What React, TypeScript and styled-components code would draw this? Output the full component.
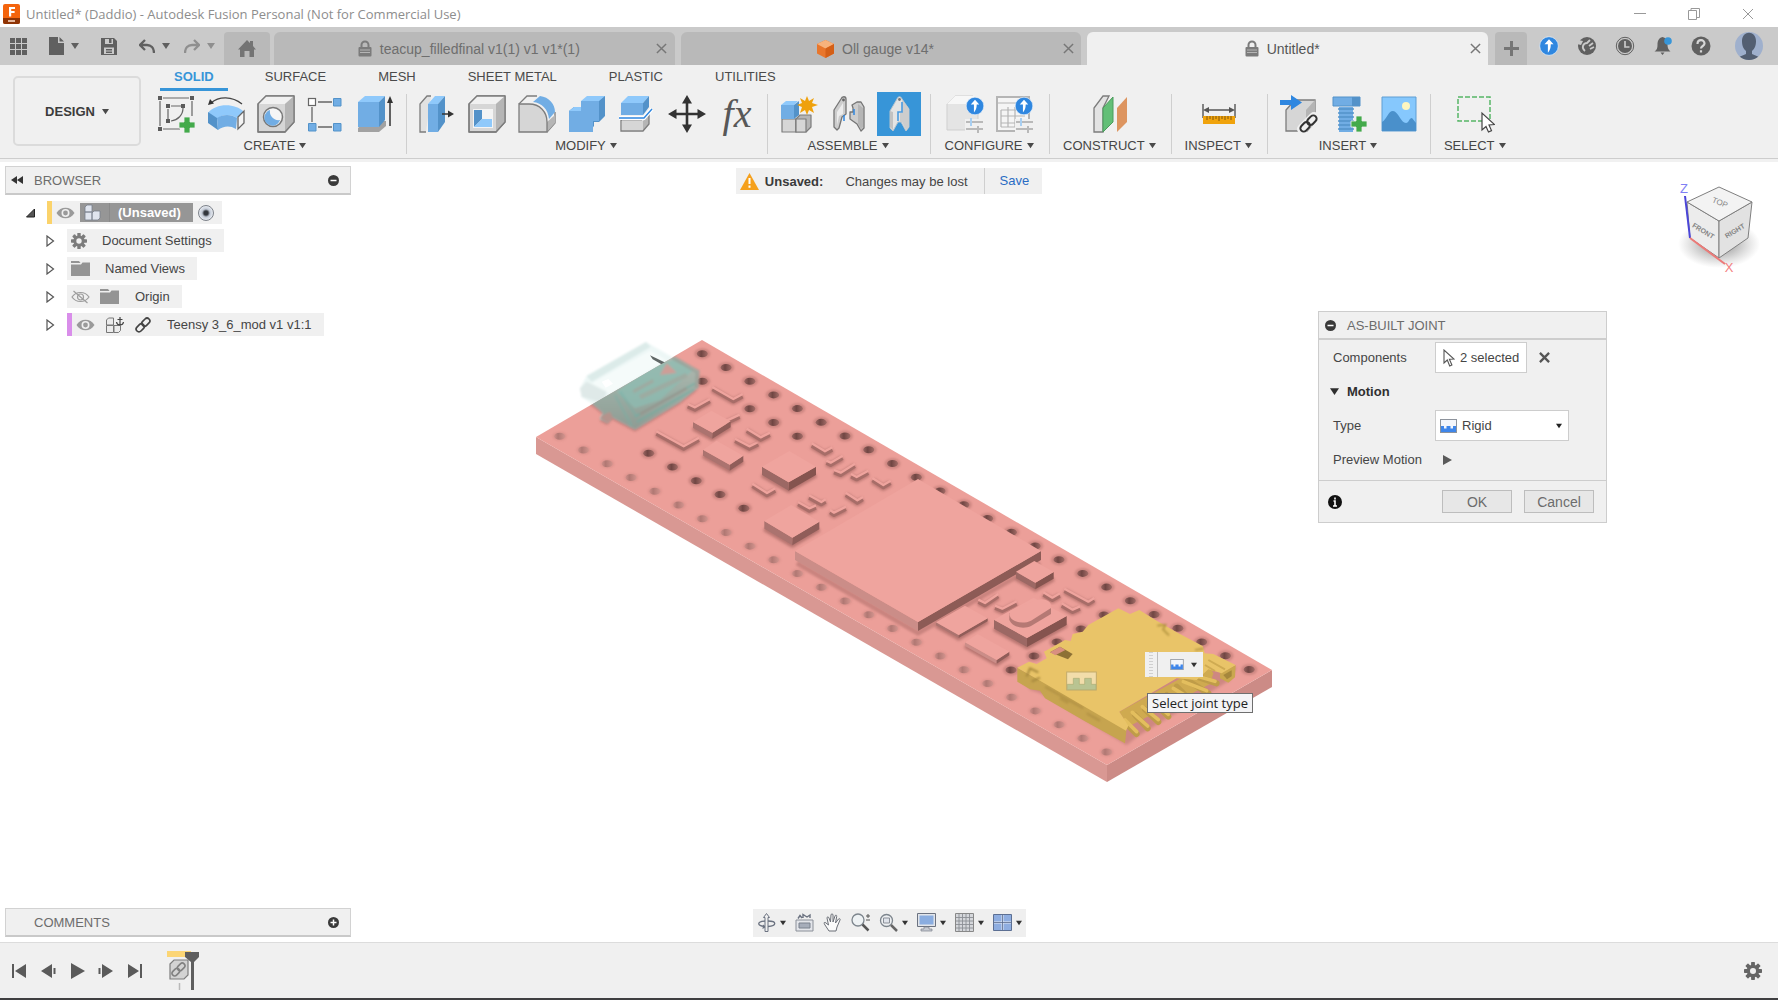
import React from "react";
import styled, { createGlobalStyle } from "styled-components";

const Global = createGlobalStyle`
  *, *::before, *::after { box-sizing: border-box; }
  body { margin: 0; background: #fff; }
  body, button, select, input { font-family: "Liberation Sans", Arial, sans-serif; font-size: 13px; color: #454545; }
  button { border: 0; background: none; padding: 0; margin: 0; cursor: pointer; }
  svg { display: block; flex: none; }
  h1, h2, ul { margin: 0; padding: 0; font-weight: normal; font-size: 13px; list-style: none; }
`;

/* ---------- colours shared by the solid-body icons ---------- */
const B = { face: "#71ade4", top: "#8fc9fb", side: "#5392c9" };
const G = { face: "#d6d6d6", top: "#f1f1f1", side: "#b5b5b5", line: "#7c7c7c" };

/* ---------- window ---------- */
const Page = styled.div`
  display: flex;
  flex-direction: column;
  min-height: 100vh;
  border-bottom: 2px solid #3f3f41;
`;
const TitleBar = styled.header`
  display: flex;
  align-items: center;
  height: 27px;
  padding: 0 3px;
  gap: 6px;
`;
const WindowTitle = styled.h1`
  flex: 1;
  font-family: "Open Sans", "Noto Sans", sans-serif;
  font-size: 13px;
  color: #8d8d8d;
  white-space: nowrap;
`;
const WindowButton = styled.button`
  display: grid;
  place-items: center;
  width: 54px;
  height: 26px;
`;
const WindowButtons = styled.div`
  display: flex;
`;

/* ---------- document tabs ---------- */
const DocBar = styled.div`
  display: flex;
  align-items: flex-end;
  height: 38px;
  background: #cacaca;
`;
const QuickAccess = styled.div`
  display: flex;
  align-items: center;
  gap: 22px;
  width: 224px;
  height: 38px;
  padding-left: 10px;
`;
const Pair = styled.div`
  display: flex;
  gap: 14px;
`;
const IconButton = styled.button<{ $faded?: boolean }>`
  display: flex;
  align-items: center;
  gap: 7px;
  opacity: ${(p) => (p.$faded ? 0.55 : 1)};
`;
const HomeTab = styled.button`
  display: grid;
  place-items: center;
  width: 46px;
  height: 33px;
  margin-right: 4px;
  background: #b9b9b9;
  border-radius: 4px 4px 0 0;
`;
const DocTabs = styled.div`
  flex: 1;
  display: flex;
  gap: 6px;
`;
const DocTab = styled.div<{ $active?: boolean }>`
  flex: 1;
  display: flex;
  align-items: center;
  height: 33px;
  padding: 0 5px 0 10px;
  border-radius: 6px 6px 0 0;
  background: ${(p) => (p.$active ? "#f0f0f0" : "#b9b9b9")};
`;
const DocName = styled.button<{ $active?: boolean }>`
  flex: 1;
  display: flex;
  align-items: center;
  justify-content: center;
  gap: 8px;
  font-size: 14px;
  white-space: nowrap;
  color: ${(p) => (p.$active ? "#555" : "#6e6e6e")};
`;
const CloseTab = styled.button`
  display: grid;
  place-items: center;
  width: 16px;
  height: 16px;
`;
const AddTab = styled(HomeTab)`
  width: 32px;
  margin: 0 0 0 7px;
`;
const Account = styled.div`
  display: flex;
  align-items: center;
  gap: 18px;
  height: 38px;
  padding: 0 15px 0 12px;
`;
const Avatar = styled.button`
  width: 28px;
  height: 28px;
  margin-left: 6px;
`;

/* ---------- ribbon ---------- */
const Ribbon = styled.section`
  display: flex;
  height: 94px;
  padding-left: 13px;
  background: #f0f0f0;
  border-bottom: 1px solid #cdcdcd;
`;
const RibbonFoot = styled.div`
  height: 3px;
  background: #f1f1f1;
`;
const Workspace = styled.button`
  display: flex;
  align-items: center;
  justify-content: center;
  gap: 7px;
  width: 128px;
  height: 70px;
  margin-top: 11px;
  border: 2px solid #dbdbdb;
  border-radius: 5px;
  font-weight: bold;
  color: #3c3c3c;
`;
const RibbonBody = styled.div`
  margin-left: 5px;
`;
const RibbonTabs = styled.nav`
  display: flex;
  gap: 22px;
  padding-left: 14px;
`;
const RibbonTab = styled.button<{ $active?: boolean }>`
  height: 26px;
  padding: 0 ${(p) => (p.$active ? 14 : 15)}px;
  border-bottom: 3px solid ${(p) => (p.$active ? "#3795d8" : "transparent")};
  font-weight: ${(p) => (p.$active ? "bold" : "normal")};
  color: ${(p) => (p.$active ? "#3795d8" : "#4a4a4a")};
  white-space: nowrap;
`;
const Groups = styled.div`
  display: flex;
  padding-top: 3px;
`;
const Group = styled.div<{ $pad: number }>`
  display: flex;
  flex-direction: column;
  align-items: center;
  height: 60px;
  padding: 0 ${(p) => p.$pad}px;
  border-right: 1px solid #cfcfcf;
  &:last-child { border-right: 0; }
`;
const Tools = styled.div`
  display: flex;
`;
const Tool = styled.button<{ $on?: boolean }>`
  display: grid;
  place-items: center;
  width: 44px;
  height: 44px;
  margin: -2px 3px 0;
  background: ${(p) => (p.$on ? "#3795d8" : "transparent")};
`;
const Formula = styled.span`
  font-family: "Liberation Serif", "Times New Roman", serif;
  font-style: italic;
  font-size: 40px;
  line-height: 44px;
  height: 44px;
  color: #585858;
`;
const GroupMenu = styled.button`
  display: flex;
  align-items: center;
  gap: 4px;
  height: 22px;
  margin-right: 2px;
  white-space: nowrap;
`;

/* ---------- viewport ---------- */
const Viewport = styled.main`
  position: relative;
  flex: 1;
  display: flex;
  flex-direction: column;
  justify-content: space-between;
  min-height: 600px;
  padding: 4px 5px 5px 5px;
  overflow: hidden;
`;
const Scene = styled.div`
  position: absolute;
  inset: 0;
  display: flex;
  justify-content: center;
  align-items: flex-start;
  padding-top: 168px;
`;
const Stage = styled.div`
  position: relative;
`;
const TopRow = styled.div`
  position: relative;
  display: grid;
  grid-template-columns: 1fr auto 1fr;
  align-items: start;
`;
const BottomRow = styled(TopRow)`
  align-items: center;
`;
const PanelBar = styled.div`
  display: flex;
  align-items: center;
  gap: 11px;
  width: 346px;
  height: 29px;
  padding: 0 11px 0 5px;
  background: #f0f0f0;
  border: 1px solid #d2d2d2;
  border-bottom: 2px solid #c9c9c9;
`;
const PanelTitle = styled.h2<{ $inset?: boolean }>`
  flex: 1;
  padding-left: ${(p) => (p.$inset ? 23 : 0)}px;
  color: #6c6c6c;
`;
const Tree = styled.ul`
  display: flex;
  flex-direction: column;
  gap: 5px;
  padding-top: 6px;
`;
const Node = styled.li<{ $depth: number }>`
  display: flex;
  align-items: center;
  gap: 12px;
  height: 23px;
  padding-left: ${(p) => 21 + p.$depth * 20}px;
`;
const NodeBody = styled.div<{ $mark?: string; $tail?: number; $gap?: number }>`
  display: flex;
  align-items: center;
  gap: ${(p) => p.$gap ?? 10}px;
  height: 23px;
  padding: 0 ${(p) => p.$tail ?? 12}px 0 4px;
  background: #f0f0f0;
  border-left: ${(p) => (p.$mark ? "5px solid " + p.$mark : "0")};
  white-space: nowrap;
`;
const NodeName = styled.button`
  padding-left: 6px;
  height: 23px;
`;
const RootName = styled.button`
  display: flex;
  align-items: center;
  height: 19px;
  gap: 8px;
  padding: 0 12px 0 4px;
  background: #969696;
  color: #fff;
  font-weight: bold;
  font-size: 13px;
`;
const RootRule = styled.span`
  width: 1px;
  height: 19px;
  background: #8a8a8a;
`;
const RootRadio = styled.input`
  appearance: none;
  width: 16px;
  height: 16px;
  margin: 0;
  border: 1px solid #7d828a;
  border-radius: 50%;
  background: radial-gradient(circle, #33373d 0 2px, #c3cad6 4px, #e8ecf2 7px);
`;
const Notice = styled.div`
  display: flex;
  align-items: center;
  height: 26px;
  margin-top: 2px;
  padding-left: 4px;
  background: #f0f0f0;
  white-space: nowrap;
`;
const NoticeStrong = styled.strong`
  padding: 0 22px 0 6px;
  color: #3a3a3a;
`;
const NoticeText = styled.span`
  padding-right: 16px;
`;
const SaveLink = styled.a`
  padding: 0 13px 0 15px;
  border-left: 1px solid #cfcfcf;
  line-height: 26px;
  color: #2a6cc4;
  text-decoration: none;
`;
const Cube = styled.div`
  justify-self: end;
  margin: 10px 11px 0 0;
`;
const NavBar = styled.div`
  display: flex;
  align-items: center;
  height: 28px;
  gap: 9px;
  padding: 0 4px;
  background: #efefef;
`;
const NavButton = styled.button`
  display: flex;
  align-items: center;
  gap: 4px;
`;

/* ---------- joint dialog ---------- */
const Dialog = styled.section`
  position: absolute;
  top: 149px;
  right: 171px;
  width: 289px;
  background: #f0f0f0;
  border: 1px solid #cdcdcd;
`;
const DialogHead = styled.div`
  display: flex;
  align-items: center;
  gap: 11px;
  height: 28px;
  padding-left: 6px;
  border-bottom: 2px solid #cdcdcd;
`;
const Form = styled.div`
  display: grid;
  grid-template-columns: 102px 1fr;
  row-gap: 3px;
  align-items: center;
  padding: 2px 14px 5px 14px;
  border-bottom: 1px solid #cdcdcd;
`;
const FieldLabel = styled.label`
  white-space: nowrap;
`;
const FieldCell = styled.div`
  display: flex;
  align-items: center;
  height: 31px;
  gap: 12px;
`;
const Picker = styled.button`
  display: flex;
  align-items: center;
  gap: 5px;
  height: 31px;
  padding: 0 7px;
  background: #fff;
  border: 1px solid #cdcdcd;
`;
const SectionToggle = styled.button`
  grid-column: 1 / -1;
  display: flex;
  align-items: center;
  gap: 8px;
  height: 31px;
  margin-left: -3px;
  font-weight: bold;
  color: #2f2f2f;
`;
const SelectBox = styled.div`
  display: flex;
  align-items: center;
  gap: 5px;
  width: 134px;
  height: 31px;
  padding: 0 6px 0 4px;
  background: #fff;
  border: 1px solid #cdcdcd;
`;
const Choice = styled.select`
  flex: 1;
  appearance: none;
  border: 0;
  padding: 0;
  height: 29px;
  background: none;
`;
const DialogFoot = styled.div`
  display: flex;
  align-items: center;
  gap: 12px;
  height: 41px;
  padding: 0 12px 0 9px;
`;
const Spacer = styled.span`
  flex: 1;
`;
const PushButton = styled.button`
  width: 70px;
  height: 23px;
  border: 1px solid #bdbdbd;
  background: #e7e7e7;
  font-size: 14px;
  color: #6c6c6c;
`;

/* ---------- floating marks over the model ---------- */
const MiniBar = styled.div`
  position: absolute;
  left: 645px;
  top: 322px;
  display: flex;
  align-items: center;
  gap: 12px;
  height: 25px;
  width: 58px;
  padding-left: 4px;
  background: #f0f0f0;
`;
const Grip = styled.span`
  width: 9px;
  height: 25px;
  border-right: 1px solid #bdbdbd;
  background: repeating-linear-gradient(0deg, #d0d0d0 0 1px, #f0f0f0 1px 3px);
  background-size: 4px 25px;
  background-repeat: no-repeat;
`;
const Tip = styled.div`
  position: absolute;
  left: 647px;
  top: 363px;
  padding: 0 4px;
  height: 20px;
  border: 1px solid #6f6f6f;
  background: #f4f4f6;
  font-family: "Open Sans", "Noto Sans", sans-serif;
  font-size: 13px;
  line-height: 18px;
  color: #222;
  white-space: nowrap;
`;

/* ---------- timeline ---------- */
const Timeline = styled.footer`
  display: flex;
  align-items: center;
  height: 56px;
  padding: 0 16px 0 11px;
  background: #f0f0f0;
  border-top: 1px solid #dcdcdc;
`;
const Transport = styled.div`
  display: flex;
  gap: 13px;
  margin-right: 23px;
`;

/* ---------- small glyphs ---------- */
const Caret = ({ w = 7, c = "#4a4a4a" }: { w?: number; c?: string }) => (
  <svg width={w} height={w} viewBox="0 0 8 8"><path d="M0 1h8L4 7z" fill={c} /></svg>
);
const Cross = ({ s = 11, c = "#777", w = 1.6 }: { s?: number; c?: string; w?: number }) => (
  <svg width={s} height={s} viewBox="0 0 12 12"><path d="M1 1l10 10M11 1L1 11" stroke={c} strokeWidth={w} fill="none" /></svg>
);
const Lock = () => (
  <svg width="14" height="17" viewBox="0 0 14 17">
    <path d="M3.5 8V5a3.5 3.5 0 0 1 7 0v3" fill="none" stroke="#7b7b7b" strokeWidth="2" />
    <rect x="0.5" y="7" width="13" height="9.5" rx="1" fill="#7b7b7b" />
    <path d="M2 10h10M2 12.500h10" stroke="#b5b5b5" strokeWidth="1" />
  </svg>
);
const Round = ({ plus }: { plus?: boolean }) => (
  <svg width="11" height="11" viewBox="0 0 11 11">
    <circle cx="5.500" cy="5.500" r="5.500" fill="#3a3a3a" />
    <path d={plus ? "M2.500 5.500h6M5.500 2.500v6" : "M2.500 5.500h6"} stroke="#fff" strokeWidth="1.500" />
  </svg>
);
const Eye = ({ off }: { off?: boolean }) => (
  <svg width="19" height="14" viewBox="0 0 19 14">
    {off ? (
      <g fill="none" stroke="#9d9d9d" strokeWidth="1.200">
        <path d="M1 7c4-6 13-6 17 0-4 6-13 6-17 0z" /><circle cx="9.500" cy="7" r="3" /><path d="M2.500 1l14 12" />
      </g>
    ) : (
      <g><path d="M.5 7c4-7 14-7 18 0-4 7-14 7-18 0z" fill="#9a9a9a" /><circle cx="9.500" cy="7" r="4" fill="#f0f0f0" /><circle cx="9.500" cy="7" r="2.400" fill="#9a9a9a" /></g>
    )}
  </svg>
);
const Folder = () => (
  <svg width="19" height="15" viewBox="0 0 19 15"><path d="M0 0h8l1.500 2H0zM0 3.500h10L11.500 1.500H19V15H0z" fill="#949494" /></svg>
);
const Gear = ({ s = 16, c = "#7c7c7c" }: { s?: number; c?: string }) => (
  <svg width={s} height={s} viewBox="0 0 16 16">
    <g fill={c}>
      {[0, 45, 90, 135].map((a) => <rect key={a} x="6.300" y="0" width="3.400" height="16" rx=".6" transform={`rotate(${a} 8 8)`} />)}
      <circle cx="8" cy="8" r="5.600" />
    </g>
    <circle cx="8" cy="8" r="2.700" fill="#f0f0f0" />
  </svg>
);
const Chain = ({ s = 16, c = "#444" }: { s?: number; c?: string }) => (
  <svg width={s} height={s} viewBox="0 0 16 16">
    <g fill="none" stroke={c} strokeWidth="1.700" transform="rotate(-45 8 8)">
      <rect x="-.5" y="5.200" width="9" height="5.600" rx="2.800" /><rect x="7.500" y="5.200" width="9" height="5.600" rx="2.800" />
    </g>
  </svg>
);
const Expander = ({ open }: { open?: boolean }) => (
  <svg width="9" height="12" viewBox="0 0 9 12">
    {open ? <path d="M8.500 2v8H.5z" fill="#555" stroke="#222" /> : <path d="M1 1v10l6.500-5z" fill="#fff" stroke="#555" strokeWidth="1.200" />}
  </svg>
);
const RigidMark = ({ w = 17 }: { w?: number }) => (
  <svg width={w} height={Math.round(w * 0.82)} viewBox="0 0 17 14">
    <rect x=".5" y=".5" width="16" height="13" fill="#f4f6fb" stroke="#8d939c" />
    <path d="M1 7h3v2.500h2.500V7h4v2.500H13V7h3v6H1z" fill="#3f86ea" />
  </svg>
);
const Pointer = () => (
  <svg width="12" height="18" viewBox="0 0 12 18">
    <path d="M1 1v13l3.300-3 2.400 6 2.200-1-2.500-5.700L11 10z" fill="#fff" stroke="#555" strokeWidth="1.100" />
  </svg>
);

const I = ({ children }: { children: React.ReactNode }) => <svg width="38" height="38" viewBox="0 0 38 38">{children}</svg>;
const Plus = ({ x, y }: { x: number; y: number }) => (
  <path transform={`translate(${x} ${y})`} d="M5 0h6v5h5v6h-5v5H5v-5H0V5h5z" fill="#43aa4b" stroke="#f0f0f0" strokeWidth=".8" />
);
const Up = ({ x, y, r }: { x: number; y: number; r: number }) => (
  <g transform={`translate(${x} ${y}) scale(${r / 8})`}>
    <circle r="8.300" fill="#2f87e0" stroke="#e8f1fb" strokeWidth=".6" />
    <path d="M0-6L4-1.500H1.600C1.600 2 .8 4 -1 6V-1.500H-4z" fill="#fff" />
  </g>
);

const SketchIcon = () => (
  <I>
    <g fill="none" stroke="#666" strokeWidth="1.200">
      <path d="M6 3h26M3 6v25M6 34h17M35 6v15M11 14v10M14 11h11M26 13c0 7-5 12-12 13" />
    </g>
    <g fill="#5b5b5b"><path d="M1 1h4v4H1zM33 1h4v4h-4zM1 32h4v4H1zM9 9h4v4H9zM24 9h4v4h-4zM9 24h4v4H9z" /></g>
    <Plus x={22} y={22} />
  </I>
);
const SweepIcon = () => (
  <I>
    <path d="M1 18C9 8 28 8 37 17l-7 6C24 19 15 19 10 24z" fill={B.top} />
    <path d="M1 17l9 6 1 12L1 28z" fill={B.side} /><path d="M10 23c6-4 14-4 20 0l-1 11c-6-4-13-3-18 1z" fill={B.face} />
    <path d="M31 22l6-6v12l-6 6z" fill="#f4f4f4" stroke="#666" strokeWidth="1.300" />
    <path d="M4 8C12 1 25 1 35 9" fill="none" stroke="#444" strokeWidth="1.400" /><path d="M1 10l2-6 4 4.500z" fill="#333" />
  </I>
);
const GrayBox = () => (
  <g stroke={G.line} strokeWidth="1.300" strokeLinejoin="round">
    <path d="M1 9L9 1h28v26l-9 10H1z" fill={G.face} /><path d="M1 9L9 1h28l-9 8z" fill={G.top} stroke="none" />
    <path d="M37 1v26l-9 10V9z" fill={G.side} stroke="none" /><path d="M1 9L9 1h28v26l-9 10H1z" fill="none" />
  </g>
);
const HoleIcon = () => (
  <I><GrayBox /><circle cx="16" cy="22" r="9.500" fill="#f6f6f6" stroke="#777" strokeWidth="1.500" />
    <path d="M13 15a8 8 0 1 0 10 10c-6 1-11-4-10-10z" fill={B.face} /></I>
);
const PatternIcon = () => (
  <I>
    <path d="M11 7h14M5 12v15M11 32h14" stroke="#666" strokeWidth="1.300" />
    <rect x="1.500" y="3.500" width="7" height="7" fill="#fff" stroke="#666" strokeWidth="1.200" />
    <g fill={B.face} stroke={B.side}><path d="M26.500 3.500h7.500v7.500h-7.500zM1.500 28.500h7.500v7.500H1.500zM26.500 28.500h7.500v7.500h-7.500z" /></g>
  </I>
);
const ExtrudeIcon = () => (
  <I>
    <path d="M1 33l8-7h20v5l-7 6H1z" fill="#a2a2a2" /><path d="M1 7l7-6h20l-6 6z" fill={B.top} />
    <path d="M1 7h21v25H1z" fill={B.face} /><path d="M22 7l6-6v24l-6 7z" fill={B.side} />
    <path d="M33 6v25" stroke="#333" strokeWidth="1.500" /><path d="M30 8l3-7 3 7z" fill="#333" />
  </I>
);
const PressIcon = () => (
  <I>
    <path d="M8 37H2V9l7-8h4" fill="#e2e2e2" stroke={G.line} strokeWidth="1.300" /><path d="M10 9l7-8h10l-7 8z" fill={B.top} />
    <path d="M10 9h10v28H10z" fill={B.face} /><path d="M20 9l7-8v26l-7 10z" fill={B.side} />
    <path d="M24 19h8" stroke="#333" strokeWidth="1.500" /><path d="M30 15.500l6 3.500-6 3.500z" fill="#333" />
  </I>
);
const ShellIcon = () => (
  <I><GrayBox /><rect x="5" y="14" width="20" height="19" fill="#f4f4f4" /><path d="M6 15h8v9l-8 8z" fill={B.side} /><path d="M14 24h10v8H6z" fill={B.top} /></I>
);
const FilletIcon = () => (
  <I>
    <path d="M1 9L9 1h10M29 37l8-9V17" fill="none" stroke={G.line} strokeWidth="1.300" />
    <path d="M29 27l8-7v8l-8 9z" fill={G.side} /><path d="M2 9l8-7h8l-6 8z" fill={G.top} />
    <path d="M1 9h10c11 0 18 8 18 18v10H1z" fill={G.face} stroke={G.line} strokeWidth="1.300" />
    <path d="M15 7l7-6c9 1 15 8 15 16l-6 7C30 14 24 8 15 7z" fill={B.face} />
  </I>
);
const CombineIcon = () => (
  <I>
    <path d="M1 16l5-4h9v-4l5-7h17v20l-6 6h-5v4l-5 6H1z" fill={B.side} /><path d="M13 6l6-5h18l-6 5zM1 16l5-4h7v4z" fill={B.top} />
    <path d="M13 6h18v20h-6v11H1V16h12z" fill={B.face} />
  </I>
);
const SplitIcon = () => (
  <I>
    <path d="M3 8l7-7h21l-6 7z" fill={B.top} /><path d="M3 8h22v12H3z" fill={B.face} /><path d="M25 8l6-7v11l-6 8z" fill={B.side} />
    <path d="M25 26l6-7v10l-6 7z" fill={G.side} /><path d="M31 19v10l-6 7H3V25h21" fill="none" stroke={G.line} strokeWidth="1.300" /><path d="M4 25.500h21V35H4z" fill={G.face} />
    <path d="M1 23h25l8-9" fill="none" stroke="#fff" strokeWidth="4" /><path d="M1 23h25l8-9" fill="none" stroke="#2f87e0" strokeWidth="1.400" />
  </I>
);
const MoveIcon = () => (
  <I><path d="M19 5v28M5 19h28" stroke="#333" strokeWidth="2.600" /><path d="M19 0l5 8.500H14zM19 38l5-8.500H14zM0 19l8.500-5v10zM38 19l-8.500-5v10z" fill="#333" /></I>
);
const FxIcon = () => <Formula>fx</Formula>;
const NewComponentIcon = () => (
  <I>
    <g stroke={G.line} strokeWidth="1.200" strokeLinejoin="round">
      <path d="M2 24h14v13H2z" fill={G.face} /><path d="M16 24l4-4h11v12l-5 5H16z" fill={G.side} /><path d="M16 24h10v13H16z" fill={G.face} />
    </g>
    <path d="M1 10l5-4h12l-4 4z" fill={B.top} /><path d="M1 10h13v14H1z" fill={B.face} /><path d="M14 10l5-4v14l-5 4z" fill={B.side} />
    <path d="M27 1l2 5 5-3-2 5 6 2-6 2 2 6-5-3-2 5-2-5-5 3 2-6-5-2 5-2-2-5 5 3z" fill="#efa10c" />
  </I>
);
const JointIcon = () => (
  <I>
    <g fill="#cdcdcd" stroke="#757575" strokeWidth="1.300" strokeLinejoin="round">
      <path d="M4 15L11 4c1-3 5-3 5 0v15l-4 3-3 11-2 2-3-3z" /><path d="M20 17h3v-4l-1-3 5-3h4l3 5v21l-3 3-4-7-7-5z" />
    </g>
    <path d="M7 17l6-9v11l-4 2-2 9z" fill="#ececec" /><path d="M24 14v6M14 20v6" stroke="#2f87e0" strokeWidth="1.500" />
    <path d="M28 9l5 4v19l-2 2-3-5z" fill="#b5b5b5" /><circle cx="13.500" cy="5" r="1.400" fill="#666" />
  </I>
);
const BuiltIcon = () => (
  <I>
    <path d="M10 16L17 4c1-3 4-3 5 0l7 10v18l-3 4-5-9h-3l-5 9-3-3z" fill="#e4e4e4" stroke="#b9c4cd" strokeLinejoin="round" />
    <path d="M22 5l7 9v18l-3 3-4-8h-2V18h2z" fill="#cdcdcd" /><path d="M10 16l3 1v18l-3-3z" fill="#c2c2c2" />
    <path d="M22 7v10h-4v9" fill="none" stroke="#4a9be0" strokeWidth="1.600" /><circle cx="19.500" cy="4.500" r="1.400" fill="#777" />
  </I>
);
const Sliders = () => (
  <g stroke="#b9b9b9" strokeWidth="2"><path d="M20 27h17M20 34h17M25 24v6M32 31v7" /><path d="M25 23v8" stroke="#a8cff2" /></g>
);
const ConfigBodyIcon = () => (
  <I>
    <path d="M1 9l8-8h18l5 5v20l-8 9H1z" fill="#e4e4e4" stroke="#cfcfcf" /><path d="M1 9l8-8h20l-6 8z" fill="#f7f7f7" />
    <path d="M19 24h19v14H19z" fill="#f0f0f0" /><Sliders /><Up x={29} y={11} r={8.5} />
  </I>
);
const ConfigTableIcon = () => (
  <I>
    <path d="M1 2h32v34H1z" fill="#f5f5f5" stroke="#b5b5b5" strokeWidth="2" /><path d="M1 8h32M5 15h24M5 21h24M5 28h14M5 15v17M12 12v20M19 12v20M5 32h14" stroke="#b5b5b5" strokeWidth="1.200" />
    <path d="M19 24h19v14H19z" fill="#f0f0f0" /><Sliders /><Up x={28} y={11} r={8.5} />
  </I>
);
const ConstructIcon = () => (
  <I>
    <path d="M3 37V13L12 1h6L12 13v24z" fill="#e3e3e3" stroke={G.line} strokeWidth="1.300" /><path d="M12 13L22 2v25L12 37z" fill="#63bf77" stroke="#4b9c5c" /><path d="M26 13L36 2v25L26 37z" fill="#dd9560" />
  </I>
);
const InspectIcon = () => (
  <I>
    <path d="M3 9v14M35 9v14M6 15h26" stroke="#555" strokeWidth="1.400" /><path d="M3 15l6-3v6zM35 15l-6-3v6z" fill="#555" /><path d="M3 21h32v8H3z" fill="#f0a30c" />
    <path d="M7 21v4M10 21v3M13 21v4M16 21v3M19 21v5M22 21v3M25 21v4M28 21v3M31 21v4" stroke="#805608" />
  </I>
);
const DeriveIcon = () => (
  <I>
    <path d="M6 15l9-10h20v22l-8 9H6z" fill={G.face} stroke={G.line} strokeWidth="1.300" /><path d="M26 15l9-10v22l-9 9z" fill={G.side} />
    <path d="M0 5h11V0l11 7.500L11 15v-5H0z" fill="#2f87e0" />
    <path d="M22 34L34 22" stroke="#f0f0f0" strokeWidth="10" strokeLinecap="round" />
    <g transform="translate(19 19)"><Chain s={19} c="#333" /></g>
  </I>
);
const BoltIcon = () => (
  <I>
    <path d="M3 2h27v9H3z" fill={B.face} stroke={B.side} /><path d="M22 2h8v9h-8z" fill={B.side} /><path d="M9 12h14v25H9z" fill={B.face} />
    <path d="M8 14h16M8 18h16M8 22h16M8 26h16M8 30h16M8 34h16" stroke={B.side} strokeWidth="1.400" /><Plus x={21} y={21} />
  </I>
);
const ImageIcon = () => (
  <I>
    <path d="M2 2h34v34H2z" fill="#86c8fd" stroke="#5e9ed4" /><circle cx="26" cy="11" r="4" fill="#fdf6c0" />
    <path d="M2 27c5-3 6-11 11-11s8 12 13 12c3 0 3-5 6-5l4 5v8H2z" fill="#4a90cb" />
  </I>
);
const SelectIcon = () => (
  <I>
    <rect x="1" y="2" width="32" height="24" fill="none" stroke="#55b566" strokeWidth="1.500" strokeDasharray="5 2" />
    <path d="M25 18v17l4-3.500 2.500 5.500 3-1.400-2.500-5.600 5.500-.5z" fill="#fff" stroke="#444" strokeWidth="1.200" />
  </I>
);

const GROUPS: { name: string; pad: number; tools: [string, () => React.ReactElement, boolean?][] }[] = [
  { name: "CREATE", pad: 5, tools: [["Create Sketch", SketchIcon], ["Sweep", SweepIcon], ["Hole", HoleIcon], ["Pattern", PatternIcon], ["Extrude", ExtrudeIcon]] },
  { name: "MODIFY", pad: 5, tools: [["Press Pull", PressIcon], ["Shell", ShellIcon], ["Fillet", FilletIcon], ["Combine", CombineIcon], ["Split Body", SplitIcon], ["Move", MoveIcon], ["Parameters", FxIcon]] },
  { name: "ASSEMBLE", pad: 6, tools: [["New Component", NewComponentIcon], ["Joint", JointIcon], ["As-built Joint", BuiltIcon, true]] },
  { name: "CONFIGURE", pad: 9, tools: [["Configure", ConfigBodyIcon], ["Configuration Table", ConfigTableIcon]] },
  { name: "CONSTRUCT", pad: 13, tools: [["Offset Plane", ConstructIcon]] },
  { name: "INSPECT", pad: 13, tools: [["Measure", InspectIcon]] },
  { name: "INSERT", pad: 6, tools: [["Derive", DeriveIcon], ["Fastener", BoltIcon], ["Canvas", ImageIcon]] },
  { name: "SELECT", pad: 13, tools: [["Select", SelectIcon]] },
];

/* ---------- the circuit board model ---------- */
const Hole = ({ x, y, dark }: { x: number; y: number; dark?: boolean }) => (
  <g>
    <ellipse cx={x} cy={y} rx={dark ? 8 : 7} ry={dark ? 5.5 : 4.5} fill="#b06f6a" opacity={dark ? 0.5 : 0.25} filter="url(#soft)" />
    <ellipse cx={x} cy={y} rx="5.500" ry="3.500" fill={dark ? "url(#holeDark)" : "url(#holeLight)"} />
  </g>
);
const PITCH = [23.78, 13.73];
const run = (x: number, y: number, idx: number[], dark?: boolean) =>
  idx.map((i) => <Hole key={`${x}-${i}`} x={x + PITCH[0] * i} y={y + PITCH[1] * i} dark={dark} />);
const range = (n: number) => Array.from({ length: n }, (_, i) => i);

type P = [number, number];
const Chip = ({ l, b, r, h, lit, deep }: { l: P; b: P; r: P; h: number; lit?: boolean; deep?: boolean }) => {
  const t: P = [l[0] + r[0] - b[0], l[1] + r[1] - b[1]];
  return (
    <g>
      <path d={`M${l[0]} ${l[1] + h}L${b[0]} ${b[1] + h}L${r[0]} ${r[1] + h}`} fill="none" stroke="#8a514d" strokeWidth="14" opacity=".55" filter="url(#soft3)" />
      <path d={`M${l}L${b}v${h}L${l[0]} ${l[1] + h}z`} fill={lit ? "#cb8d88" : deep ? "#9c6864" : "#ab736f"} />
      <path d={`M${b}L${r}v${h}L${b[0]} ${b[1] + h}z`} fill={deep ? "#85544f" : "#905d59"} />
      <path d={`M${l}L${b}L${r}L${t}z`} fill="#efa49e" />
    </g>
  );
};
const Ledge = ({ d }: { d: string }) => (
  <g fill="none" strokeLinejoin="round">
    <path d={d} stroke="#8a514d" strokeWidth="18" opacity=".55" filter="url(#soft3)" />
    <path d={d} stroke="#a76d68" strokeWidth="10" />
    <path d={d} stroke="#efa49e" strokeWidth="7" transform="translate(0 -8)" />
  </g>
);
const LEDGES_A = [
  "M577 209L640 245L668 230", "M503 260L525 270L570 245", "M409 342L491 387L537 361", "M645 364L688 387L715 374",
  "M680 334L722 360L750 346", "M875 378L915 402L937 390", "M919 430L932 436L968 415", "M942 458L962 466L1005 439",
  "M993 470L1010 479L1045 460", "M1057 482L1090 503L1112 490", "M697 499L741 527L766 513", "M867 534L904 554L917 546",
  "M834 554L868 573L888 564", "M930 578L942 586L978 568", "M977 526L1012 549L1029 539", "M620 310L659 292",
];
const LEDGES_B = [
  "M295 427L315 437L355 410", "M345 445L367 454L410 432", "M490 405L517 421L540 408", "M553 394L625 433L643 422", "M545 438L578 457L600 447",
];
const USB = "M180 205L200 168L378 66L455 110L533 155L530 205L480 245L345 328L275 290L262 308L240 296L250 278L222 255L185 232z";

const Board = () => (
  <svg width="778" height="465" viewBox="500 330 778 465" role="img" aria-label="Circuit board model">
    <defs>
      <filter id="soft" x="-50%" y="-50%" width="200%" height="200%"><feGaussianBlur stdDeviation="1.300" /></filter>
      <filter id="soft1" x="-30%" y="-30%" width="160%" height="160%"><feGaussianBlur stdDeviation="2.500" /></filter>
      <filter id="soft3" x="-40%" y="-80%" width="180%" height="260%"><feGaussianBlur stdDeviation="4" /></filter>
      <linearGradient id="holeDark" x1="0" x2="1"><stop offset="0" stopColor="#9a6561" /><stop offset=".4" stopColor="#704643" /><stop offset="1" stopColor="#a36c67" /></linearGradient>
      <linearGradient id="holeLight" x1="0" x2="1"><stop offset="0" stopColor="#cf8f8a" /><stop offset=".35" stopColor="#b07873" /><stop offset="1" stopColor="#d3948e" /></linearGradient>
      <clipPath id="onBoard"><path d="M48 351L547 61L1200 437V840H48z" /></clipPath>
      <linearGradient id="teal" x1="0" y1="0" x2="0" y2="1"><stop offset=".2" stopColor="#b3b9b0" /><stop offset=".6" stopColor="#9aaca3" /><stop offset="1" stopColor="#8f9b93" /></linearGradient>
    </defs>
    <path d="M536 437L1107 765v17L536 454z" fill="#d99893" />
    <path d="M1107 765L1272 670v17L1107 782z" fill="#cc8b86" />
    <path d="M536 437L702 340L1272 670L1107 765z" fill="#ec9f99" />
    {run(559.7, 436.3, range(24))}
    {run(702.3, 353.7, range(24), true)}
    {run(702.3, 381.3, [0, 2, 3, 4], true)}
    {run(648.7, 453.3, range(5), true)}
    {[[1104, 615], [1081, 629], [1057, 642], [1034, 656], [1011, 670]].map(([x, y]) => <Hole key={x} x={x} y={y} dark />)}

    <g transform="translate(520 320) scale(.33333)">
      {LEDGES_A.map((d) => <Ledge key={d} d={d} />)}
      <Chip l={[519, 306]} b={[577, 338]} r={[632, 304]} h={18} />
      <Chip l={[549, 389]} b={[629, 434]} r={[670, 407]} h={18} />
      <Chip l={[726, 440]} b={[806, 487]} r={[888, 440]} h={25} deep />
      <Chip l={[733, 603]} b={[817, 653]} r={[898, 605]} h={23} />
      <g filter="url(#soft1)">
        <path d={USB} fill="#edf7f6" />
        <path d="M200 168L378 66L392 80L215 185z" fill="#dcebe9" />
        <path d="M215 190L390 92L440 120L268 222z" fill="#f5fbfa" />
        <path d="M180 205L200 185L260 215L250 250L185 230z" fill="#dfe9e8" />
      </g>
      <path d="M390 106L440 130v12L398 118z" fill="#5f6665" /><path d="M245 185l20-8 14 14-22 12z" fill="#fff" />
      <g clipPath="url(#onBoard)">
        <path d={USB} fill="#8a514d" opacity=".5" filter="url(#soft3)" transform="translate(0 6)" />
        <g filter="url(#soft1)">
          <path d={USB} fill="url(#teal)" />
          <path d="M290 215L395 140L470 115L520 150L420 240L345 265z" fill="#8cbcb1" opacity=".75" />
          <path d="M420 165L440 130L470 158z" fill="#cd9e97" /><path d="M360 232L500 165" stroke="#a6a39a" strokeWidth="14" opacity=".6" />
          <path d="M340 215L400 182" stroke="#a6a39a" strokeWidth="9" opacity=".7" />
          <path d="M345 290L525 190M350 306L522 208" stroke="#6aaea3" strokeWidth="6" opacity=".6" /><path d="M360 282L500 205" stroke="#a08d86" strokeWidth="7" opacity=".7" />
          <path d="M285 225L335 318M300 215L350 290" stroke="#76b1a7" strokeWidth="9" opacity=".4" />
          <path d="M455 110L533 155L530 205" fill="none" stroke="#99a097" strokeWidth="12" opacity=".8" />
          <path d="M240 290L270 275L280 295L262 310z" fill="#b5938c" />
        </g>
      </g>
    </g>

    <path d="M797 563L918 633L1040 563" fill="none" stroke="#8a514d" strokeWidth="5" opacity=".35" filter="url(#soft)" />
    <path d="M795 551L918 622v9L795 560z" fill="#cb8d88" />
    <path d="M918 622L1041 551v9L918 631z" fill="#8d5b56" />
    <path d="M795 551L918 479L1041 551L918 622z" fill="#efa49e" />

    <g transform="translate(880 460) scale(.33333)">
      {LEDGES_B.map((d) => <Ledge key={d} d={d} />)}
      <Chip l={[408, 335]} b={[466, 368]} r={[521, 336]} h={20} deep />
      <Chip l={[168, 487]} b={[236, 525]} r={[323, 475]} h={9} />
      <Chip l={[255, 547]} b={[350, 600]} r={[388, 575]} h={11} lit />
      <Chip l={[342, 479]} b={[441, 534]} r={[560, 468]} h={27} deep />
      <path d="M388 460v20c10 24 45 28 65 18l60-36v-18z" fill="#b57974" />
      <path d="M390 452L470 420c25-8 48 6 43 24l-60 38c-25 12-60 4-65-18z" fill="#efa49e" />

      <path d="M412 645l40 45 30 10 258 156 30-25 280-170 20-40z" fill="#8a514d" opacity=".3" filter="url(#soft3)" />
      <path d="M718 755L985 610L1000 640L990 672L745 800z" fill="#cfaa50" />
      <g stroke="#bf9c48" strokeWidth="18" strokeLinecap="round" fill="none">
        <path d="M735 788L770 822M765 765L803 805M795 748L835 786M825 730L865 770M860 705L900 745M890 680L930 720M920 660L985 700M950 650L1010 670" />
      </g>
      <g stroke="#e3be5e" strokeWidth="11" strokeLinecap="round" fill="none">
        <path d="M735 780L770 815M757 757L803 798M787 740L835 779M817 722L865 763M847 705L900 739M880 685L930 715M910 665L980 692M940 645L1005 664" />
      </g>
      <path d="M412 623L480 660L740 805L735 850L620 787L495 715L480 692L450 688L412 665z" fill="#c6a44f" />
      <path d="M495 680L610 745M540 715l25 14M620 760l40 22" stroke="#b39345" strokeWidth="7" filter="url(#soft1)" />
      <path d="M1020 640L1067 615L1065 652L1045 668L1020 655z" fill="#caa74e" /><path d="M1030 645l25-14v18l-14 9z" fill="#a5873c" />
      <path d="M412 623L447 605L470 612L500 595L492 575L555 540L572 543L578 522L608 515L625 495L715 445L750 462L778 450L830 482L890 517L968 558L974 580L1000 582L1067 615L1025 640L985 628L950 660L890 655L718 755L745 797L738 812L480 662z" fill="#e9c468" />
      <path d="M510 577l30-17 38 22-14 16z" fill="#8d7135" /><path d="M510 577l30-17 16 10-30 16z" fill="#d98f81" />
      <g filter="url(#soft1)">
        <path d="M440 650l10-25 25 12M455 665l25-12" fill="none" stroke="#a5873c" strokeWidth="6" />
        <path d="M832 497l25-3-8 14 18 18" fill="none" stroke="#b0913f" strokeWidth="5" /><path d="M945 570l26-4" fill="none" stroke="#b0913f" strokeWidth="5" />
      </g>
      <path d="M985 600l50 28M975 615l30 18" stroke="#cfab52" strokeWidth="6" />
      <g opacity=".75">
        <rect x="560" y="636" width="89" height="54" fill="#f6e6c0" stroke="#b7a36c" strokeWidth="3" />
        <path d="M562 673h18v-18h18v18h16v-18h20v18h14v16h-86z" fill="#a9c5a0" stroke="#97a678" strokeWidth="2" />
      </g>
    </g>
  </svg>
);

const ViewCube = () => (
  <svg width="92" height="100" viewBox="1670 176 92 100" role="img" aria-label="View cube">
    <defs><radialGradient id="shade"><stop offset="0" stopColor="#555" stopOpacity=".75" /><stop offset="1" stopColor="#888" stopOpacity="0" /></radialGradient></defs>
    <ellipse cx="1719" cy="244" rx="41" ry="24" fill="url(#shade)" />
    <g stroke="#7f7f7f" strokeWidth="1" strokeLinejoin="round">
      <path d="M1687 202l32 19v37l-29-20z" fill="#ececec" /><path d="M1719 221l33-19-4 36-29 20z" fill="#e2e2e2" /><path d="M1719 187l33 15-33 19-32-19z" fill="#f3f3f3" />
    </g>
    <path d="M1685 196l5 42" stroke="#4a45d8" strokeWidth="2" /><path d="M1690 238l35 26" stroke="#ec7a78" strokeWidth="2" />
    <g fontFamily="Liberation Sans, Arial, sans-serif" fill="#858585" textAnchor="middle">
      <text transform="translate(1702 233) rotate(31)" fontSize="7" fontWeight="bold">FRONT</text>
      <text transform="translate(1736 233) rotate(-31)" fontSize="7" fontWeight="bold">RIGHT</text>
      <text transform="translate(1719 205) rotate(22)" fontSize="8">TOP</text>
      <text x="1684" y="193" fontSize="13" fill="#8080f4">Z</text>
      <text x="1729" y="272" fontSize="13" fill="#f47f7f">X</text>
    </g>
  </svg>
);

/* ---------- navigation bar glyphs ---------- */
const N = ({ children }: { children: React.ReactNode }) => <svg width="19" height="19" viewBox="0 0 19 19">{children}</svg>;
const NAV: [string, boolean, React.ReactElement][] = [
  ["Orbit", true, <N key="o"><path d="M9 8C0 8-1 13 8 13.500M11 8c9 0 9 5 0 5.500" fill="none" stroke="#6b7280" strokeWidth="1.300" /><path d="M6 11.500l3 2.500-3.500 2z" fill="#6b7280" /><path d="M9.500 .5l3 4H11v14H8v-14H6.500z" fill="#f0f0f0" stroke="#6b7280" /></N>],
  ["Look At", false, <N key="l"><path d="M1 7h17v11H1z" fill="#e3e5ea" stroke="#8a8f98" /><path d="M4 10h11v5H4z" fill="#a6adba" stroke="#7b828e" /><path d="M3 5.500l2-3 2 2.500M8 5V1.500L12 4l3-2v3" fill="none" stroke="#6b7280" strokeWidth="1.400" /></N>],
  ["Pan", false, <N key="p"><path d="M6 18l-4-6c-2-3 0-3 1-2l2.500 2L4 5c0-1.500 1.500-1.500 2 0L7.500 9 8 2c0-1.500 2-1.500 2 0v7l2-6c.5-1.500 2-1 1.700.5L12.500 10l3-4c1-1 2 0 1.500 1l-3 7-1 4z" fill="#fafafa" stroke="#6b6f77" strokeWidth="1" /></N>],
  ["Zoom", false, <N key="z"><circle cx="7" cy="7" r="6" fill="#eef2f4" stroke="#7d858d" strokeWidth="1.300" /><path d="M11.500 11.500l6 6" stroke="#555" strokeWidth="2.500" /><path d="M15 3h4M17 1v4M15 7h4" stroke="#555" /></N>],
  ["Zoom Window", true, <N key="w"><circle cx="7.500" cy="7.500" r="6" fill="#eef0f2" stroke="#7d858d" strokeWidth="1.300" /><path d="M4.500 5h6v5h-6z" fill="#dfe3ea" stroke="#8a8f98" /><path d="M12 12l6 6" stroke="#666" strokeWidth="2.500" /></N>],
  ["Display Settings", true, <N key="d"><path d="M.5 .5h18v13H.5z" fill="#e2e5ea" stroke="#6b7280" /><path d="M2.500 2.500h14v9h-14z" fill="#8aade0" /><path d="M7 14h5v2h3v2H4v-2h3z" fill="#c6cad1" stroke="#7b828e" strokeWidth=".7" /></N>],
  ["Grid", true, <N key="g"><path d="M.5 .5h18v18H.5z" fill="#d5d7db" stroke="#888" /><path d="M4 1v17M7.500 1v17M11 1v17M14.500 1v17M1 4.500h17M1 8h17M1 11.500h17M1 15h17" stroke="#8b8e94" strokeWidth=".9" /></N>],
  ["Viewports", true, <N key="v"><path d="M.5 1.500h18v16H.5z" fill="#8eade0" stroke="#5c6f93" /><path d="M9.500 2v15M1 9.500h17" stroke="#dfe7f4" strokeWidth="2" /><path d="M9.500 2v15M1 9.500h17" stroke="#56688c" strokeWidth=".8" /></N>],
];

const T = ({ d }: { d: string }) => <svg width="16" height="18" viewBox="0 0 16 18"><path d={d} fill="#5a5a5a" /></svg>;

export default function App() {
  return (
    <>
      <Global />
      <Page>
        <TitleBar>
          <svg width="17" height="20" viewBox="0 0 17 20">
            <rect width="17" height="20" rx="2" fill="#f4640d" /><path d="M0 14h17v4a2 2 0 0 1-2 2H2a2 2 0 0 1-2-2z" fill="#8f3405" />
            <path d="M6 3h6v2H8.200v2h3.400v2H8.200v3.500H6z" fill="#fff" /><path d="M5 17h7" stroke="#e4b79c" strokeWidth="2" />
          </svg>
          <WindowTitle>Untitled* (Daddio) - Autodesk Fusion Personal (Not for Commercial Use)</WindowTitle>
          <WindowButtons>
            <WindowButton aria-label="Minimize"><svg width="12" height="12"><path d="M0 5.500h12" stroke="#999" /></svg></WindowButton>
            <WindowButton aria-label="Restore"><svg width="12" height="12"><path d="M.5 2.500h8v9h-8zM3 2.500V.5h8.500V9.500H9" fill="none" stroke="#999" /></svg></WindowButton>
            <WindowButton aria-label="Close"><Cross s={12} c="#999" w={1} /></WindowButton>
          </WindowButtons>
        </TitleBar>

        <DocBar>
          <QuickAccess>
            <IconButton aria-label="Data panel">
              <svg width="17" height="17" viewBox="0 0 17 17"><path d="M0 0h5v5H0zM6 0h5v5H6zM12 0h5v5h-5zM0 6h5v5H0zM6 6h5v5H6zM12 6h5v5h-5zM0 12h5v5H0zM6 12h5v5H6zM12 12h5v5h-5z" fill="#606060" /></svg>
            </IconButton>
            <IconButton aria-label="File">
              <svg width="15" height="18" viewBox="0 0 15 18"><path d="M0 0h9v6h6v12H0zM10.500 0L15 4.500h-4.500z" fill="#606060" /></svg><Caret w={8} c="#606060" />
            </IconButton>
            <IconButton aria-label="Save">
              <svg width="16" height="17" viewBox="0 0 16 17"><path d="M0 0h13l3 3v14H0z" fill="#606060" /><path d="M4 1h8v5H4zM3 9.500h10V16H3z" fill="#cacaca" /><path d="M8 1h2.500v4H8zM5 11h6v1.500H5zM5 13.500h6V15H5z" fill="#606060" /></svg>
            </IconButton>
            <Pair>
              <IconButton aria-label="Undo">
                <svg width="16" height="15" viewBox="0 0 16 15"><path d="M6 1L1 6l5 5M2 6h6c4 0 7 3 7 8" fill="none" stroke="#606060" strokeWidth="2.300" /></svg><Caret w={8} c="#606060" />
              </IconButton>
              <IconButton $faded aria-label="Redo">
                <svg width="16" height="15" viewBox="0 0 16 15"><path d="M10 1l5 5-5 5M14 6H8c-4 0-7 3-7 8" fill="none" stroke="#606060" strokeWidth="2.300" /></svg><Caret w={8} c="#606060" />
              </IconButton>
            </Pair>
          </QuickAccess>
          <HomeTab aria-label="Home">
            <svg width="18" height="17" viewBox="0 0 18 17"><path d="M9 0l3 3V1h3v5l3 3.500h-2V17h-4.500v-6h-5v6H2V9.500H0z" fill="#747474" /></svg>
          </HomeTab>
          <DocTabs>
            <DocTab><DocName><Lock />teacup_filledfinal v1(1) v1 v1*(1)</DocName><CloseTab aria-label="Close tab"><Cross /></CloseTab></DocTab>
            <DocTab>
              <DocName>
                <svg width="17" height="18" viewBox="0 0 17 18"><path d="M8.500 0L17 4v9.500L8.500 18 0 13.500V4z" fill="#e8762c" /><path d="M8.500 0L17 4 8.500 8.500 0 4z" fill="#f7b27c" /><path d="M17 4v9.500L8.500 18V8.500z" fill="#d45f17" /></svg>
                Oll gauge v14*
              </DocName>
              <CloseTab aria-label="Close tab"><Cross /></CloseTab>
            </DocTab>
            <DocTab $active><DocName $active><Lock />Untitled*</DocName><CloseTab aria-label="Close tab"><Cross /></CloseTab></DocTab>
          </DocTabs>
          <AddTab aria-label="New design"><svg width="15" height="15"><path d="M7.500 0v15M0 7.500h15" stroke="#757575" strokeWidth="3" /></svg></AddTab>
          <Account>
            <IconButton aria-label="Updates"><svg width="20" height="20" viewBox="0 0 20 20"><Up x={10} y={10} r={9} /></svg></IconButton>
            <IconButton aria-label="Extensions">
              <svg width="20" height="20" viewBox="0 0 20 20">
                <circle cx="10" cy="10" r="9" fill="#606060" />
                <path d="M8 15C4 12 6 7 10 7l3-3M12 10l4-3M13 13l4-2" stroke="#cacaca" strokeWidth="1.800" fill="none" /><path d="M1 4l5 1-2 4-4-1z" fill="#cacaca" />
              </svg>
            </IconButton>
            <IconButton aria-label="Job status">
              <svg width="20" height="20" viewBox="0 0 20 20"><circle cx="10" cy="10" r="8.700" fill="none" stroke="#606060" /><circle cx="10" cy="10" r="7" fill="#606060" /><path d="M10 5v6h4.500" stroke="#cacaca" strokeWidth="1.700" fill="none" /></svg>
            </IconButton>
            <IconButton aria-label="Notifications">
              <svg width="20" height="20" viewBox="0 0 20 20"><path d="M9.500 1c4 1 5 4 5 8 0 3 1 5 3 6.500H1.500C4 14 4.500 12 4.500 9c0-4 1-7 5-8zM7.500 16.500h4L9.500 19z" fill="#606060" /><circle cx="15" cy="5" r="3.800" fill="#3795d8" /></svg>
            </IconButton>
            <IconButton aria-label="Help">
              <svg width="20" height="20" viewBox="0 0 20 20"><circle cx="10" cy="10" r="9.500" fill="#606060" /><path d="M6.500 8c0-5 7-5 7-.5C13.500 10 10 10 10 12.500M10 14.200v2.200" stroke="#d6d6d6" strokeWidth="2.200" fill="none" /></svg>
            </IconButton>
            <Avatar aria-label="Profile">
              <svg width="28" height="28" viewBox="0 0 28 28">
                <defs><clipPath id="av"><circle cx="14" cy="14" r="14" /></clipPath></defs>
                <g clipPath="url(#av)"><rect width="28" height="28" fill="#9fb0cd" /><path d="M7 9c0-11 14-11 14 0 0 6-2 8-4 10v3l7 3v4H4v-4l7-3v-3c-2-2-4-4-4-10z" fill="#535f72" /></g>
              </svg>
            </Avatar>
          </Account>
        </DocBar>

        <Ribbon>
          <Workspace>DESIGN <Caret /></Workspace>
          <RibbonBody>
            <RibbonTabs>
              {["SOLID", "SURFACE", "MESH", "SHEET METAL", "PLASTIC", "UTILITIES"].map((t, i) => <RibbonTab key={t} $active={i === 0}>{t}</RibbonTab>)}
            </RibbonTabs>
            <Groups>
              {GROUPS.map((g) => (
                <Group key={g.name} $pad={g.pad}>
                  <Tools>
                    {g.tools.map(([label, Icon, on]) => <Tool key={label} aria-label={label} $on={on}><Icon /></Tool>)}
                  </Tools>
                  <GroupMenu>{g.name} <Caret /></GroupMenu>
                </Group>
              ))}
            </Groups>
          </RibbonBody>
        </Ribbon>
        <RibbonFoot />

        <Viewport>
          <Scene>
            <Stage>
              <Board />
              <MiniBar>
                <Grip />
                <IconButton aria-label="Joint type"><RigidMark w={14} /><Caret w={6} c="#333" /></IconButton>
              </MiniBar>
              <Tip role="tooltip">Select joint type</Tip>
            </Stage>
          </Scene>

          <TopRow>
            <div>
              <PanelBar>
                <svg width="12" height="8" viewBox="0 0 12 8"><path d="M6 0v8L0 4zM12 0v8L6 4z" fill="#333" /></svg>
                <PanelTitle>BROWSER</PanelTitle>
                <IconButton aria-label="Collapse browser"><Round /></IconButton>
              </PanelBar>
              <Tree>
                <Node $depth={0}>
                  <Expander open />
                  <NodeBody $mark="#fbd36b" $tail={8} $gap={5}>
                    <Eye />
                    <RootName>
                      <svg width="17" height="17" viewBox="0 0 17 17"><g fill="#dfe4ee" stroke="#777e8c" strokeWidth=".8"><path d="M1 3l2-2h5v7H1zM1 8h7v8H1zM8 9l2-2h6v7l-2 2H8z" /></g></svg>
                      <RootRule />(Unsaved)
                    </RootName>
                    <RootRadio type="radio" name="active-component" aria-label="Activate component" defaultChecked />
                  </NodeBody>
                </Node>
                <Node $depth={1}><Expander /><NodeBody $gap={9}><Gear /><NodeName>Document Settings</NodeName></NodeBody></Node>
                <Node $depth={1}><Expander /><NodeBody $gap={9}><Folder /><NodeName>Named Views</NodeName></NodeBody></Node>
                <Node $depth={1}><Expander /><NodeBody><Eye off /><Folder /><NodeName>Origin</NodeName></NodeBody></Node>
                <Node $depth={1}>
                  <Expander />
                  <NodeBody $mark="#d98eea">
                    <Eye />
                    <svg width="20" height="18" viewBox="0 0 20 18"><g fill="#ececec" stroke="#777"><path d="M1.500 4l2-2h5v7h-7zM1.500 9.500h7v7h-7zM9 9.500h6.500v5l-2 2H9z" /></g><path d="M15 1v8M12.500 3.500h5M11.500 6c.5 4 6.500 4 7 0" fill="none" stroke="#444" strokeWidth="1.200" /></svg>
                    <Chain /><NodeName>Teensy 3_6_mod v1 v1:1</NodeName>
                  </NodeBody>
                </Node>
              </Tree>
            </div>
            <Notice>
              <svg width="19" height="17" viewBox="0 0 19 17"><path d="M9.500 0L19 17H0z" fill="#f5a01c" /><path d="M9.500 5v6M9.500 12.500v2.200" stroke="#fff" strokeWidth="2" /></svg>
              <NoticeStrong>Unsaved:</NoticeStrong>
              <NoticeText>Changes may be lost</NoticeText>
              <SaveLink href="#save">Save</SaveLink>
            </Notice>
            <Cube><ViewCube /></Cube>
          </TopRow>

          <Dialog aria-label="As-built joint">
            <DialogHead><Round /><PanelTitle>AS-BUILT JOINT</PanelTitle></DialogHead>
            <Form>
              <FieldLabel htmlFor="components">Components</FieldLabel>
              <FieldCell>
                <Picker id="components"><Pointer />2 selected</Picker>
                <IconButton aria-label="Clear selection"><Cross s={11} c="#555" w={2.5} /></IconButton>
              </FieldCell>
              <SectionToggle><Caret w={9} c="#2f2f2f" />Motion</SectionToggle>
              <FieldLabel htmlFor="type">Type</FieldLabel>
              <FieldCell>
                <SelectBox><RigidMark /><Choice id="type" defaultValue="Rigid"><option>Rigid</option></Choice><Caret w={6} c="#222" /></SelectBox>
              </FieldCell>
              <FieldLabel htmlFor="preview">Preview Motion</FieldLabel>
              <FieldCell>
                <IconButton id="preview" aria-label="Play preview"><svg width="18" height="10" viewBox="0 0 18 10"><path d="M8 0l9 5-9 5z" fill="#5a5a5a" /></svg></IconButton>
              </FieldCell>
            </Form>
            <DialogFoot>
              <svg width="14" height="14" viewBox="0 0 14 14"><circle cx="7" cy="7" r="7" fill="#111" /><path d="M7 2.500v2M5.500 6H7v5M5 11h4" stroke="#fff" strokeWidth="1.600" fill="none" /></svg>
              <Spacer />
              <PushButton>OK</PushButton>
              <PushButton>Cancel</PushButton>
            </DialogFoot>
          </Dialog>

          <BottomRow>
            <PanelBar>
              <PanelTitle $inset>COMMENTS</PanelTitle>
              <IconButton aria-label="Expand comments"><Round plus /></IconButton>
            </PanelBar>
            <NavBar>
              {NAV.map(([label, menu, icon]) => <NavButton key={label} aria-label={label}>{icon}{menu && <Caret w={6} c="#333" />}</NavButton>)}
            </NavBar>
          </BottomRow>
        </Viewport>

        <Timeline>
          <Transport>
            <IconButton aria-label="Go to start"><T d="M1 2h2v14H1zM15 2v14L4 9z" /></IconButton>
            <IconButton aria-label="Step back"><T d="M12 2v14L1 9zM13.500 6h2v6h-2z" /></IconButton>
            <IconButton aria-label="Play"><T d="M2 1l14 8-14 8z" /></IconButton>
            <IconButton aria-label="Step forward"><T d="M4 2v14l11-7zM.5 6h2v6h-2z" /></IconButton>
            <IconButton aria-label="Go to end"><T d="M1 2v14l11-7zM13 2h2v14h-2z" /></IconButton>
          </Transport>
          <svg width="34" height="42" viewBox="166 951 34 42">
            <path d="M167 952h24v6h-24z" fill="#fbd575" /><path d="M170 965l4-4h14v15l-4 4h-14z" fill="#d3d3d3" stroke="#7d7d7d" strokeWidth="1.200" />
            <g transform="translate(171 963)"><Chain s={15} c="#808080" /></g>
            <path d="M179.500 984v7" stroke="#b9b9b9" strokeWidth="1.500" /><path d="M185 953h14v5l-5 5v28h-3v-28l-6-5z" fill="#5e5e5e" />
          </svg>
          <Spacer />
          <IconButton aria-label="Timeline settings"><Gear s={18} c="#666" /></IconButton>
        </Timeline>
      </Page>
    </>
  );
}
